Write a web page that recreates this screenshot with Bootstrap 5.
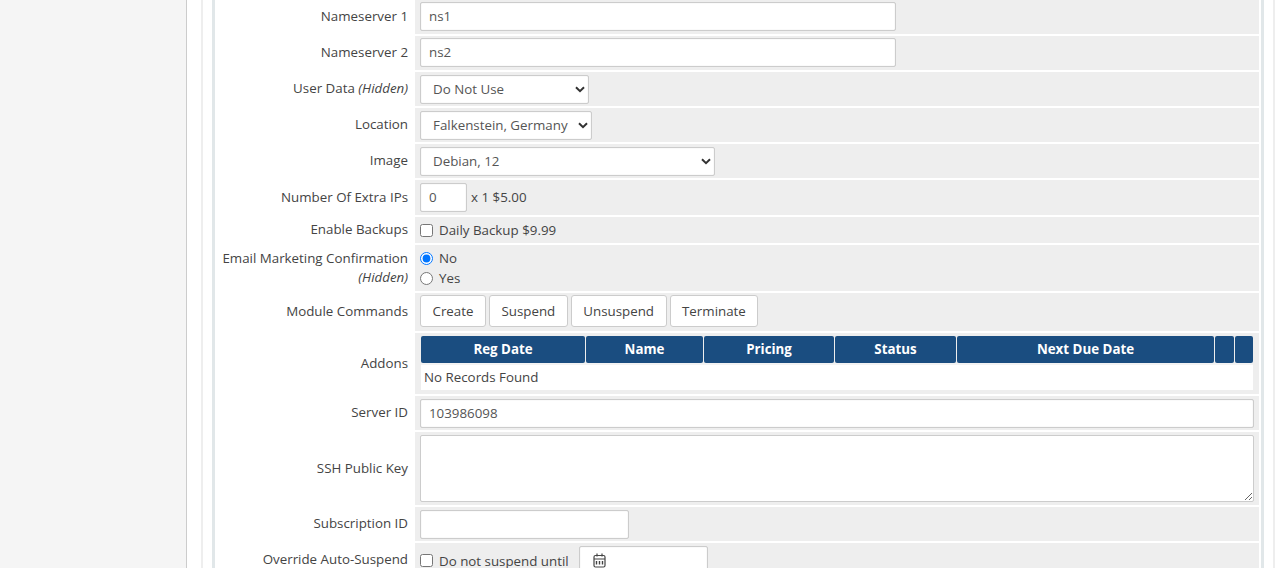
<!DOCTYPE html>
<html lang="en">
<head>
<meta charset="utf-8">
<title>Service</title>
<link href="https://cdn.jsdelivr.net/npm/bootstrap@5.3.0/dist/css/bootstrap.min.css" rel="stylesheet">
<style>
html,body{height:568px;overflow:hidden;background:#fff}
body{font-family:"Open Sans","Liberation Sans",sans-serif;font-size:13.33px;color:#444}
.side-pane{width:187px;background:#f5f5f5;border-right:1px solid #ccc;height:568px}
.outer-frame{margin-left:14px;margin-right:5px;border-left:2px solid #eee;border-right:2px solid #eee;padding:0 9px}
.inner-frame{border-left:3px solid #e1e7e9;border-right:3px solid #e1e7e9;height:568px;overflow:hidden}
.form-grid{width:1046px;border-collapse:separate;border-spacing:2px;margin-top:-2px;table-layout:fixed}
.col-label{width:196px}
.form-grid>tbody>tr>td{padding:0}
.form-grid>tbody>tr>td.cell-label{text-align:right;padding:0 5px 1px 0;line-height:19px;color:#444;vertical-align:middle}
.form-grid>tbody>tr>td.cell-field{background:#eee;padding:3px 5px 0;vertical-align:top}
.r34{height:34px}.r35{height:35px}.r26{height:26px}.r46{height:46px}.r38{height:38px}.r61{height:61px}.r73{height:73px}
.form-grid>tbody>tr.pt2>td.cell-field{padding-top:2px}
.field-text.form-control,.field-sel.form-select{height:29px;min-height:0;padding:0 8px;font-size:13.33px;color:#555;border:1px solid #ccc;border-radius:2px;background-color:#fff;box-shadow:inset 0 0 1px #ccc}
.field-text.form-control{padding-bottom:1px}
.field-sel.form-select{padding:0 16px 0 12px;background-image:url("data:image/svg+xml,%3csvg xmlns='http://www.w3.org/2000/svg' viewBox='0 0 10 7'%3e%3cpath fill='none' stroke='%23333' stroke-width='2' d='M1 1.2l4 4 4-4'/%3e%3c/svg%3e");background-position:right 3px center;background-size:10px 7px}
.w-476{width:476px}.w-48{width:47px}.w-209{width:209px}.w-129{width:129px}
.w-169{width:169px}.w-172{width:172px}.w-295{width:295px}
.field-area.form-control{height:67px;min-height:0;border:1px solid #ccc;border-radius:2px;padding:4px 8px;font-size:13.33px}
.cmd-btn.btn{height:32px;padding:0 11.5px;font-size:13.33px;color:#444;background:#fff;border:1px solid #ccc;border-radius:3px;line-height:30px}
.cmd-row{gap:3px}
.box-row{gap:6px;line-height:20px}
.native-box{margin:0;width:13px;height:13px;flex:none}
.addon-grid{width:834px;border-collapse:separate;border-spacing:1px 0;table-layout:fixed;margin-top:0}
.addon-grid th{background:#1a4d80;color:#fff;text-align:center;font-weight:700;height:27px;padding:0 0 2px;border-radius:2px;line-height:24px}
.addon-grid td{background:#fff;height:25px;padding:0 3px 2px;color:#444;line-height:22px}
.addon-gap td{height:2px;padding:0;background:#f3f3f3;line-height:0}
.date-row{gap:10px}
.date-wrap{width:129px}
.date-ico{position:absolute;left:14px;top:7px;width:13px;height:15px}
</style>
</head>
<body>
<div class="d-flex">
  <div class="side-pane flex-shrink-0"></div>
  <div class="flex-grow-1">
    <div class="outer-frame">
      <div class="inner-frame">
        <table class="form-grid">
          <colgroup><col class="col-label"><col></colgroup>
          <tbody>
            <tr class="r34 pt2"><td class="cell-label">Nameserver 1</td><td class="cell-field"><input class="form-control field-text w-476" type="text" value="ns1"></td></tr>
            <tr class="r34 pt2"><td class="cell-label">Nameserver 2</td><td class="cell-field"><input class="form-control field-text w-476" type="text" value="ns2"></td></tr>
            <tr class="r34"><td class="cell-label">User Data <em>(Hidden)</em></td><td class="cell-field"><select class="form-select field-sel w-169"><option>Do Not Use</option></select></td></tr>
            <tr class="r34"><td class="cell-label">Location</td><td class="cell-field"><select class="form-select field-sel w-172"><option>Falkenstein, Germany</option></select></td></tr>
            <tr class="r34"><td class="cell-label">Image</td><td class="cell-field"><select class="form-select field-sel w-295"><option>Debian, 12</option></select></td></tr>
            <tr class="r35"><td class="cell-label">Number Of Extra IPs</td><td class="cell-field"><div class="d-flex align-items-center gap-1"><input class="form-control field-text w-48" type="text" value="0"><span>x 1 $5.00</span></div></td></tr>
            <tr class="r26"><td class="cell-label">Enable Backups</td><td class="cell-field"><label class="d-flex align-items-center box-row"><input class="native-box" type="checkbox"><span>Daily Backup $9.99</span></label></td></tr>
            <tr class="r46"><td class="cell-label">Email Marketing Confirmation <em>(Hidden)</em></td><td class="cell-field">
              <label class="d-flex align-items-center box-row"><input class="native-box" type="radio" name="em" checked><span>No</span></label>
              <label class="d-flex align-items-center box-row"><input class="native-box" type="radio" name="em"><span>Yes</span></label>
            </td></tr>
            <tr class="r38 pt2"><td class="cell-label">Module Commands</td><td class="cell-field"><div class="d-flex cmd-row"><button type="button" class="btn cmd-btn">Create</button><button type="button" class="btn cmd-btn">Suspend</button><button type="button" class="btn cmd-btn">Unsuspend</button><button type="button" class="btn cmd-btn">Terminate</button></div></td></tr>
            <tr class="r61"><td class="cell-label">Addons</td><td class="cell-field">
              <table class="addon-grid">
                <colgroup><col style="width:164px"><col style="width:117px"><col style="width:130px"><col style="width:121px"><col style="width:257px"><col style="width:19px"><col style="width:18px"></colgroup>
                <thead><tr><th>Reg Date</th><th>Name</th><th>Pricing</th><th>Status</th><th>Next Due Date</th><th></th><th></th></tr></thead>
                <tbody><tr class="addon-gap"><td colspan="7"></td></tr><tr><td colspan="7">No Records Found</td></tr></tbody>
              </table>
            </td></tr>
            <tr class="r34"><td class="cell-label">Server ID</td><td class="cell-field"><input class="form-control field-text" type="text" value="103986098"></td></tr>
            <tr class="r73"><td class="cell-label">SSH Public Key</td><td class="cell-field"><textarea class="form-control field-area"></textarea></td></tr>
            <tr class="r34"><td class="cell-label">Subscription ID</td><td class="cell-field"><input class="form-control field-text w-209" type="text"></td></tr>
            <tr class="r34"><td class="cell-label">Override Auto-Suspend</td><td class="cell-field"><div class="d-flex align-items-center date-row">
              <label class="d-flex align-items-center box-row"><input class="native-box" type="checkbox"><span>Do not suspend until</span></label>
              <div class="position-relative date-wrap"><input class="form-control field-text w-100" type="text">
                <svg class="date-ico" viewBox="0 0 13 15" fill="none" stroke="#444" stroke-width="1.2"><rect x="1" y="2.5" width="11" height="11.5" rx="1.5"/><path d="M1 6h11M4 .5v3M9 .5v3"/><path d="M3.5 8v3.5M6.5 8v3.5M9.5 8v3.5" stroke-width="1.4"/></svg>
              </div></div></td></tr>
          </tbody>
        </table>
      </div>
    </div>
  </div>
</div>
<script src="https://cdn.jsdelivr.net/npm/bootstrap@5.3.0/dist/js/bootstrap.bundle.min.js"></script>
</body>
</html>
